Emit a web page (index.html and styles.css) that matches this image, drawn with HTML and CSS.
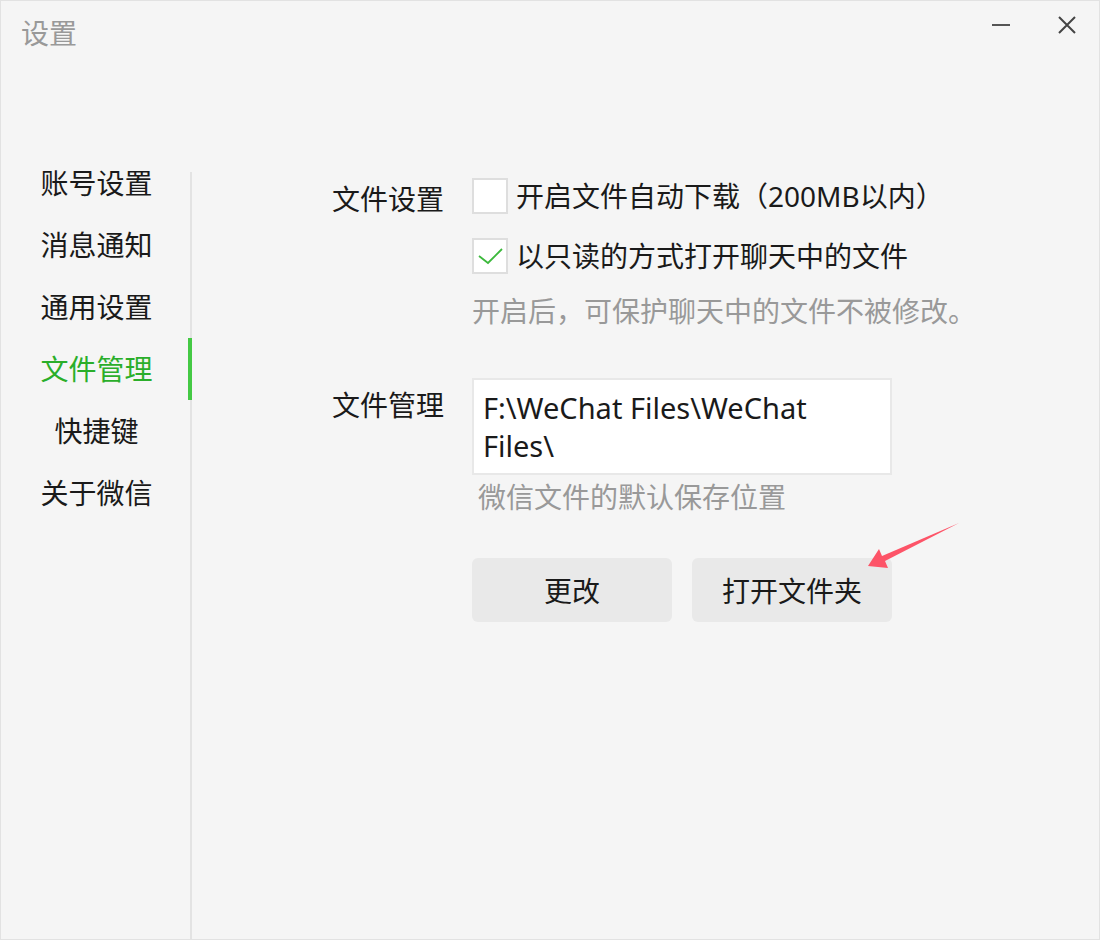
FILE: index.html
```html
<!DOCTYPE html>
<html lang="zh-CN">
<head>
<meta charset="utf-8">
<title>设置</title>
<link rel="stylesheet" href="styles.css">
</head>
<body>
<div class="window">
  <header class="titlebar">
    <div class="title">设置</div>
    <div class="win-controls">
      <button class="win-btn" aria-label="最小化">
        <svg width="18" height="18" viewBox="0 0 18 18"><line x1="0" y1="9" x2="18" y2="9" stroke="#555" stroke-width="2"/></svg>
      </button>
      <button class="win-btn" aria-label="关闭">
        <svg width="18" height="18" viewBox="0 0 18 18"><path d="M1 1 L17 17 M17 1 L1 17" stroke="#444" stroke-width="2" fill="none"/></svg>
      </button>
    </div>
  </header>
  <div class="body">
    <nav class="sidebar">
      <div class="nav-item">账号设置</div>
      <div class="nav-item">消息通知</div>
      <div class="nav-item">通用设置</div>
      <div class="nav-item active">文件管理</div>
      <div class="nav-item">快捷键</div>
      <div class="nav-item">关于微信</div>
    </nav>
    <main class="content">
      <section class="setting">
        <div class="label">文件设置</div>
        <div class="field">
          <label class="check-row">
            <span class="checkbox"></span>
            <span>开启文件自动下载（200MB以内）</span>
          </label>
          <label class="check-row second">
            <span class="checkbox">
              <svg width="32" height="32" viewBox="0 0 32 32"><path d="M5 16 L14 23 L28 9" stroke="#3cb93c" stroke-width="1.8" fill="none"/></svg>
            </span>
            <span>以只读的方式打开聊天中的文件</span>
          </label>
          <div class="hint">开启后，可保护聊天中的文件不被修改。</div>
        </div>
      </section>
      <section class="setting files">
        <div class="label label-files">文件管理</div>
        <div class="field">
          <div class="path-box">F:\WeChat Files\WeChat Files\</div>
          <div class="hint hint-path">微信文件的默认保存位置</div>
          <div class="buttons">
            <button class="btn">更改</button>
            <button class="btn">打开文件夹</button>
          </div>
        </div>
      </section>
    </main>
  </div>
  <svg class="arrow" width="100" height="50" viewBox="860 520 100 50">
    <polygon points="868,566 879,549 882,556 959,523 885,561 888,568" fill="#fd5468"/>
  </svg>
</div>
</body>
</html>
```

FILE: styles.css
```css
* { box-sizing: border-box; }
html, body { margin: 0; padding: 0; }
body {
  font-family: "Noto Sans", "Noto Sans CJK SC", sans-serif;
  color: #1a1a1a;
  background: #f5f5f5;
}
.window {
  position: relative;
  width: 1100px;
  height: 940px;
  background: #f5f5f5;
  border: 1px solid #e2e2e2;
  display: flex;
  flex-direction: column;
}
.titlebar {
  height: 151px;
  flex: none;
  display: flex;
  justify-content: space-between;
  align-items: flex-start;
  padding: 14px 23px 0 20px;
}
.title {
  font-size: 28px;
  line-height: 36px;
  color: #999;
}
.win-controls {
  display: flex;
  gap: 48px;
  margin-top: 1px;
}
.win-btn {
  border: none;
  background: none;
  padding: 0;
  width: 18px;
  height: 18px;
  display: block;
}
.win-btn svg { display: block; }
.body {
  flex: 1;
  display: flex;
}
.sidebar {
  width: 191px;
  flex: none;
  background: linear-gradient(#e3e3e3, #e3e3e3) right 20px / 2px 100% no-repeat;
}
.nav-item {
  height: 62px;
  line-height: 62px;
  font-size: 28px;
  text-align: center;
  color: #1a1a1a;
}
.nav-item.active {
  color: #2aae2a;
  box-shadow: inset -4px 0 0 #44c944;
}
.content {
  flex: 1;
  padding: 26px 0 0 140px;
}
.setting {
  display: grid;
  grid-template-columns: 140px 1fr;
  font-size: 28px;
}
.label {
  line-height: 36px;
  padding-top: 3px;
}
.label-files { padding-top: 9px; }
.check-row {
  display: flex;
  align-items: center;
  gap: 8px;
  line-height: 36px;
}
.check-row.second { margin-top: 24px; }
.checkbox {
  width: 36px;
  height: 36px;
  background: #fff;
  border: 2px solid #dedede;
  flex: none;
}
.checkbox svg { display: block; }
.hint {
  color: #999;
  line-height: 40px;
  margin-top: 17px;
}
.files { margin-top: 47px; }
.path-box {
  width: 420px;
  background: #fff;
  border: 2px solid #e8e8e8;
  padding: 9px 40px 8px 9px;
  line-height: 38px;
  font-size: 29px;
}
.hint-path {
  margin-top: 2px;
  padding-left: 6px;
}
.buttons {
  display: flex;
  gap: 20px;
  margin-top: 41px;
}
.btn {
  width: 200px;
  height: 64px;
  border: none;
  border-radius: 6px;
  background: #e9e9e9;
  font-family: inherit;
  font-size: 28px;
  color: #1a1a1a;
  padding: 0;
}
.arrow {
  position: absolute;
  left: 859px;
  top: 519px;
}
```
